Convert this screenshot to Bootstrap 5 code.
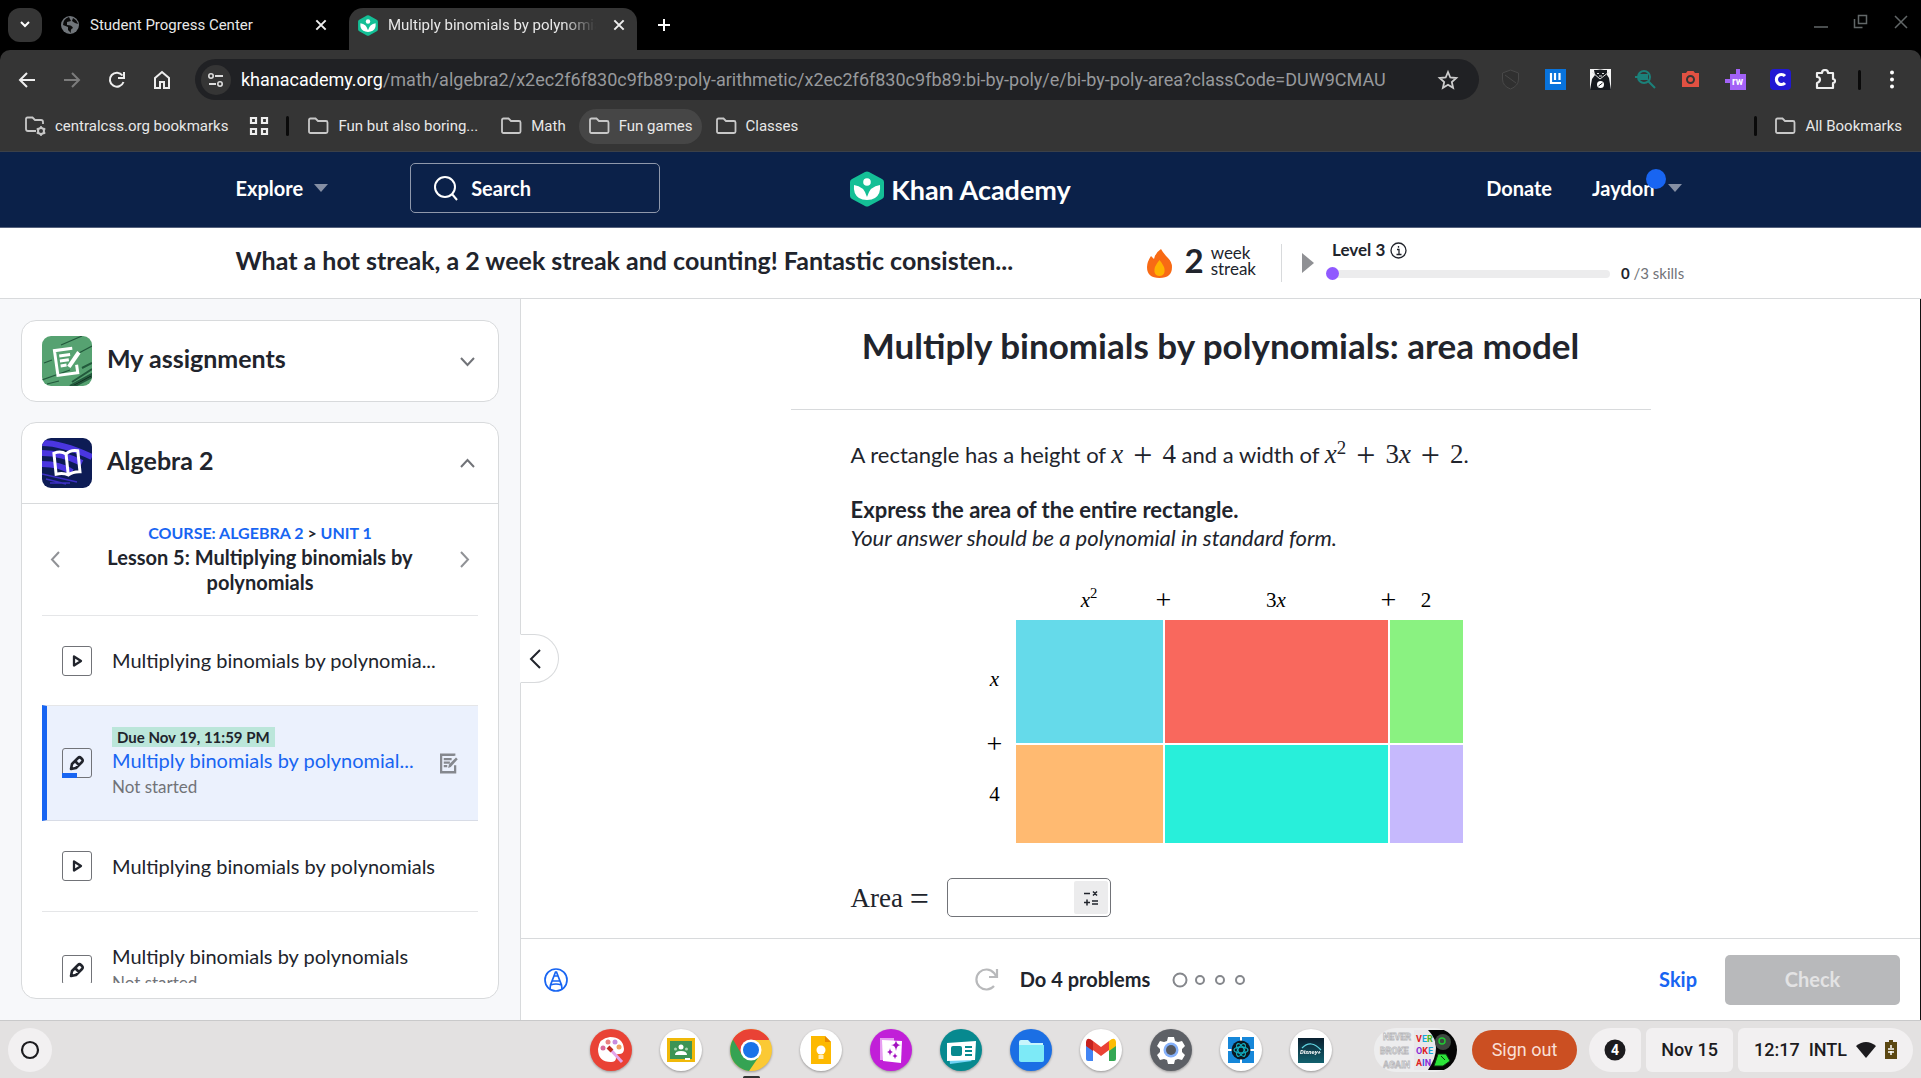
<!DOCTYPE html>
<html lang="en">
<head>
<meta charset="utf-8">
<meta name="viewport" content="width=device-width, initial-scale=1">
<title>Multiply binomials by polynomials: area model</title>
<link rel="stylesheet" href="https://cdn.jsdelivr.net/npm/bootstrap@5.3.0/dist/css/bootstrap.min.css">
<style>
body{font-family:Lato,"Noto Sans",sans-serif;font-size:20px;line-height:25px;color:#21242c;background:#000;height:100vh;overflow:hidden}
button{font:inherit;color:inherit;background:none;border:0;padding:0}
a{text-decoration:none;color:inherit}
svg{display:block;flex:none}
.chrome-ui{font-family:Roboto,sans-serif;color:#e8e8e8;font-size:15px;line-height:20px}
.tabstrip{height:50px;padding:8px 12px 0 8px;background:#000}
.tabsearch{width:34px;height:34px;border-radius:12px;background:#353535}
.tab-item{height:42px;padding:0 11px 8px 18px}
.tab-idle{width:301px;padding-right:15px}
.tab-live{width:288px;background:#353535;border-radius:14px 14px 0 0;margin-left:6px}
.tab-live .tab-label{-webkit-mask-image:linear-gradient(90deg,#000 84%,transparent);mask-image:linear-gradient(90deg,#000 84%,transparent)}
.tab-label{white-space:nowrap;overflow:hidden;flex:1}
.toolbar{height:59px;background:#353535;padding:0 15px;border-radius:10px 10px 0 0}
.omnibox{height:41px;border-radius:21px;background:#202124;flex:1;font-size:18px;padding:0 19px 0 6px;color:#97999c}
.omnibox b{font-weight:400;color:#fff}
.tune{width:30px;height:30px;border-radius:15px;background:#353535}
.vbar{width:3px;height:20px;background:#0a0a0a;border-radius:2px}
.bookbar{height:42px;background:#353535;padding:0 19px 8px 24px}
.bookbar a{height:35px;padding:0 9px;gap:9px;border-radius:18px}
.bookbar .lit{background:#464646}
.khan-nav{height:77px;background:#0b2149;color:#fff;font-weight:700;border-bottom:1px solid #56627d;border-top:1px solid #3c4048;padding-bottom:3px}
.wide-box{max-width:1450px;width:100%;margin:0 auto}
.search-box{width:250px;height:50px;border:1px solid #8f98ab;border-radius:5px;padding-left:22px;margin-left:82px}
.search-box input{background:none;border:0;outline:0;color:#fff;font-weight:700;width:170px;padding:0}
.search-box input::placeholder{color:#fff;opacity:1}
.brand{font-size:27px;padding-top:2px}
.user-dot{position:absolute;right:-11px;top:-7px;width:20px;height:20px;border-radius:50%;background:#1865f2}
.streak{height:71px;background:#fff;border-bottom:1px solid #d8dadc}
.streak-title{font-size:25px;font-weight:700;width:911px;line-height:32px;padding-bottom:6px}
.streak-num{font-size:33px;font-weight:700;line-height:36px;padding-bottom:6px}
.streak-word{font-size:17px;line-height:16px;padding-bottom:4px}
.level-name{font-size:17px;font-weight:700;line-height:20px;padding-bottom:1px}
.level-track{width:278px;height:8px;border-radius:4px;background:#ececed}
.level-dot{width:13px;height:13px;border-radius:50%;background:#9059ff;margin-left:-6px}
.skills{font-size:15px;color:#717378}
.skills b{color:#21242c}
.page-body{background:#fff;border-right:1px solid #111}
.side{width:521px;background:#f7f8fa;border-right:1px solid #d8dadc;padding:21px;gap:20px}
.panel{background:#fff;border:1px solid #d8dadc;border-radius:15px}
.panel-head{height:80px;padding:0 22px 0 20px;gap:15px;font-size:25px;font-weight:700;line-height:30px}
.panel-head span{padding-bottom:6px}
.tile-pic{width:50px;height:50px;border-radius:9px}
.lesson-nav{border-top:1px solid #d8dadc;margin:0 -1px;padding:16px 21px 0 21px;height:112px}
.crumb{font-size:16px;font-weight:700;color:#1865f2;line-height:25px}
.lesson-name{font-weight:700;line-height:25px}
.lesson-list{margin:0 20px 15px;overflow:hidden}
.lesson-row{border-top:1px solid #e5e6e8;height:90px;padding:0 19px 0 20px;gap:20px;flex:none}
.lesson-row.now{height:116px;background:#ebf1fd;border-left:5px solid #1865f2;border-bottom:1px solid #d8dce6;padding-left:15px}
.now .lesson-text{padding-bottom:4px}
.kind{width:30px;height:30px;border:1px solid #717378;border-radius:3px;position:relative}
.kind-bar{position:absolute;left:-1px;bottom:-1px;width:15px;height:5px;background:#1865f2}
.due{background:#bbe6da;font-size:15px;font-weight:700;line-height:20px;padding:0 5px;color:#21242c}
.sub{font-size:17px;color:#717378;line-height:25px;padding-top:1px}
.fold{position:absolute;left:-1px;top:335px;width:39px;height:49px;background:#fff;border:1px solid #d8dadc;border-left-color:#fff;border-radius:0 25px 25px 0;padding-left:6px}
.exercise{max-width:860px;width:100%;margin:0 auto;padding-top:26px}
.exercise h1{font-size:35px;font-weight:700;line-height:40px;margin:0}
.rule-line{border-top:1px solid #d8dadc;margin-top:44px;padding:30px 60px 0}
.prose{font-size:22px;line-height:28px}
.prose p{margin:0 0 27px}
.mathy{font-family:"Liberation Serif",serif;font-size:27px;line-height:28px;white-space:nowrap}
.mathy sup,.axis sup{font-size:70%;top:-9px;line-height:0}
.op{font-size:34px;line-height:0;margin:0 10px;vertical-align:-3px}
.axis{font-family:"Liberation Serif",serif;font-size:21px;line-height:28px;color:#000;text-align:center}
.plus{width:20px;margin:0 -9px;font-size:28px}
.axis-v .plus{width:auto;height:28px;margin:-13px 0}
.axis-v .h1x{padding-bottom:6px}
.w1{width:147px}.w2{width:223px}.w3{width:73px}
.h1x{height:123px}.h2x{height:98px}
.figure-box{margin-left:133px;gap:10px}
.answer{width:164px;height:39px;border:1px solid #717378;border-radius:5px;padding:2px}
.answer input{border:0;outline:0;width:124px;background:none}
.keypad{width:34px;background:#ececed;border-radius:2px}
.foot{height:82px;border-top:1px solid #d8dadc;padding:0 20px}
.foot .act{font-weight:700}
.check-btn{width:175px;height:50px;border-radius:5px;background:#b8b9bb;color:#e3e3e4;font-weight:700}
.shelf{height:58px;background:#e3e1e1;border-top:1px solid #c9c9ca;font-family:Roboto,sans-serif;font-size:18px;color:#1c1b1e;padding:0 8px}
.chip{height:44px;background:#f2f0f1;border-radius:6px}
.out{width:105px;height:40px;border-radius:20px;background:#cb4f22;color:#f9dfd6}
.apps{gap:28px}
.apps svg{filter:drop-shadow(0 1px 1px #0005)}
.apps .running{position:relative}
.apps .running:after{content:"";position:absolute;left:13px;bottom:-8px;width:17px;height:3px;background:#333;border-radius:2px}
</style>
<script src="https://cdn.jsdelivr.net/npm/bootstrap@5.3.0/dist/js/bootstrap.bundle.min.js"></script>
</head>
<body class="d-flex flex-column">
<svg width="0" height="0" class="position-absolute" aria-hidden="true"><defs>
<symbol id="folder" viewBox="0 0 22 18"><path d="M2 3q0-1.500 1.500-1.500h5l2.500 2.500h8q1.500 0 1.500 1.500v9q0 1.500-1.500 1.500h-15.500q-1.500 0-1.500-1.500z" fill="none" stroke="#c8c8c8" stroke-width="1.800"/></symbol>
<symbol id="leaf" viewBox="0 0 34 36"><path d="M15 1q2-1 4 0l13 7q2 1 2 3v14q0 2-2 3l-13 7q-2 1-4 0l-13-7q-2-1-2-3v-14q0-2 2-3z" fill="#14bf96"/><circle cx="17" cy="11" r="3.800" fill="#fff"/><path d="M4 14q10 1 13 12q3-11 13-12q1 9-5 13-3 2-8 2t-8-2q-6-4-5-13z" fill="#fff"/></symbol>
<symbol id="x" viewBox="0 0 12 12"><path d="M2 2l8 8M10 2l-8 8" stroke="#eee" stroke-width="1.700"/></symbol>
<symbol id="play" viewBox="0 0 14 16"><path d="M4 3.500l7 4.500-7 4.500z" fill="none" stroke="#21242c" stroke-width="2.300" stroke-linejoin="round"/></symbol>
<symbol id="pencil" viewBox="0 0 16 16"><path d="M2 14l1-5 6-6q1.500-1.500 3 0l1 1q1.500 1.500 0 3l-6 6zM6.500 6.500l3.500 3.500" fill="none" stroke="#21242c" stroke-width="2.600" stroke-linejoin="round"/></symbol>
<symbol id="doc" viewBox="0 0 22 24"><path d="M17 3V2H2v20h16v-8M5 7h9M5 11h7M5 15h4" fill="none" stroke="currentColor" stroke-width="2.600"/><path d="M10 17l1-4 8-8 2 2-8 9z" fill="currentColor"/></symbol>
</defs></svg>

<div class="chrome-ui flex-shrink-0">
 <div class="tabstrip d-flex">
  <button class="tabsearch d-flex align-items-center justify-content-center" aria-label="Search tabs"><svg width="12" height="10" viewBox="0 0 12 10"><path d="M2 2l4 4 4-4" fill="none" stroke="#fff" stroke-width="2"/></svg></button>
  <div class="tab-item tab-idle d-flex align-items-center gap-2">
   <svg width="20" height="20" viewBox="0 0 20 20" class="me-1"><circle cx="10" cy="10" r="9" fill="#70757a"/><path d="M9 2q-6 2-6 8l5 2v3l3 3q-1-4 2-5-1-3-6-3v-3l4-1zM13 3l-1 3 3 2 3 1q-1-4-5-6z" fill="#0a0a0a"/></svg>
   <span class="tab-label" style="margin-left:-2px">Student Progress Center</span>
   <button aria-label="Close tab"><svg width="14" height="14"><use href="#x"/></svg></button>
  </div>
  <div class="tab-item tab-live d-flex align-items-center gap-2" style="padding-left:9px">
   <svg width="20" height="21" style="margin-right:2px"><use href="#leaf"/></svg>
   <span class="tab-label">Multiply binomials by polynomials</span>
   <button aria-label="Close tab" class="ms-2"><svg width="14" height="14"><use href="#x"/></svg></button>
  </div>
  <button aria-label="New tab" class="ms-3 ps-1 pb-2"><svg width="14" height="14" viewBox="0 0 14 14"><path d="M7 1v12M1 7h12" stroke="#fff" stroke-width="2"/></svg></button>
  <div class="d-flex ms-auto gap-4 align-items-start pt-1">
   <button aria-label="Minimize"><svg width="16" height="18" viewBox="0 0 16 18"><path d="M1 15h14" stroke="#626768" stroke-width="1.500"/></svg></button>
   <button aria-label="Restore"><svg width="16" height="18" viewBox="0 0 16 18"><path d="M5.500 3.500h8v8h-8zM1.500 7v8.500h8" fill="none" stroke="#626768" stroke-width="1.500"/></svg></button>
   <button aria-label="Close"><svg width="16" height="18" viewBox="0 0 16 18"><path d="M2 4l12 12M14 4l-12 12" stroke="#626768" stroke-width="1.500"/></svg></button>
  </div>
 </div>
 <div class="toolbar d-flex align-items-center">
  <div class="d-flex align-items-center" style="width:180px;gap:21px">
   <button aria-label="Back"><svg width="24" height="24" viewBox="0 0 24 24"><path d="M20 12H5M12 5l-7 7 7 7" fill="none" stroke="#eee" stroke-width="2"/></svg></button>
   <button aria-label="Forward"><svg width="24" height="24" viewBox="0 0 24 24"><path d="M4 12h15M12 5l7 7-7 7" fill="none" stroke="#7c7c7c" stroke-width="2"/></svg></button>
   <button aria-label="Reload"><svg width="24" height="24" viewBox="0 0 24 24"><path d="M18.500 14a7 7 0 1 1-1-6.500M19 4v6h-6" fill="none" stroke="#eee" stroke-width="2"/></svg></button>
   <button aria-label="Home"><svg width="24" height="24" viewBox="0 0 24 24"><path d="M5 10l7-6 7 6v10h-5v-6h-4v6H5z" fill="none" stroke="#eee" stroke-width="2"/></svg></button>
  </div>
  <div class="omnibox d-flex align-items-center">
   <button class="tune d-flex align-items-center justify-content-center" aria-label="Site information"><svg width="18" height="18" viewBox="0 0 18 18"><path d="M8 5h8M2 13h7" stroke="#ddd" stroke-width="1.800"/><circle cx="4" cy="5" r="2.200" fill="none" stroke="#ddd" stroke-width="1.600"/><circle cx="13" cy="13" r="2.200" fill="none" stroke="#ddd" stroke-width="1.600"/></svg></button>
   <span class="flex-grow-1 text-nowrap" style="padding-left:10px"><b>khanacademy.org</b>/math/algebra2/x2ec2f6f830c9fb89:poly-arithmetic/x2ec2f6f830c9fb89:bi-by-poly/e/bi-by-poly-area?classCode=DUW9CMAU</span>
   <button aria-label="Bookmark"><svg width="24" height="24" viewBox="0 0 24 24"><path d="M12 4l2.300 5.500 6 .500-4.500 4 1.300 5.800L12 16.700l-5.100 3.100 1.300-5.800-4.500-4 6-.500z" fill="none" stroke="#ccc" stroke-width="1.800"/></svg></button>
  </div>
  <div class="d-flex align-items-center" style="gap:24px;padding-left:21px">
   <svg width="21" height="21" viewBox="0 0 21 21"><path d="M10.500 1l8 3v6q0 7-8 10-8-3-8-10V4zM5 6l11 8" fill="#303030" stroke="#484848"/></svg>
   <svg width="21" height="21" viewBox="0 0 21 21"><path d="M0 0h21v21H0z" fill="#0873dc"/><path d="M6 4v10h10M10 4v7M14.500 4v7" fill="none" stroke="#fff" stroke-width="2.200"/></svg>
   <svg width="21" height="21" viewBox="0 0 21 21"><path d="M0 0h21v21H0z" fill="#f4f4f4"/><path d="M4 1l3 0q3-1 7 0l3 0 0 5 2 3 2 12H0l2-11 3-4z" fill="#16191e"/><path d="M2 3l8 7 9-7M7 4.500h2M12 4.500h2M9 7h3" fill="none" stroke="#ddd"/><circle cx="10.500" cy="15.500" r="3.500" fill="#fff"/><path d="M8.500 17l4-3" stroke="#16191e"/></svg>
   <svg width="21" height="21" viewBox="0 0 21 21"><circle cx="9" cy="8" r="6" fill="none" stroke="#1b817a" stroke-width="2"/><path d="M0 8h12M5 6h7v4H5zM13 12l7 7" fill="none" stroke="#1b817a" stroke-width="2"/></svg>
   <svg width="21" height="21" viewBox="0 0 21 21"><path d="M2 4h4l1.500-2h6L15 4h4v14H2z" fill="#e15142"/><circle cx="10.500" cy="10.500" r="3.500" fill="none" stroke="#353535" stroke-width="2"/></svg>
   <svg width="21" height="21" viewBox="0 0 21 21"><path d="M5 5h6V0h4v5h6v16H5v-7H0v-4h5z" fill="#a362f7"/><text x="7" y="16" font-size="10" font-weight="700" fill="#fff">rw</text></svg>
   <svg width="21" height="21" viewBox="0 0 21 21"><rect width="21" height="21" rx="4" fill="#2118d3"/><path d="M15 7a5 5 0 1 0 0 7" fill="none" stroke="#fff" stroke-width="3.200"/></svg>
   <svg width="21" height="21" viewBox="0 0 21 21"><path d="M2 4h5q0-3 3-3t3 3h5v6q2 0 2 2t-2 2v5H2v-5q3-1 3-3.500T2 8z" fill="none" stroke="#eee" stroke-width="2.200" stroke-linejoin="round"/></svg>
   <div class="vbar" style="margin-left:-2px"></div>
   <svg width="21" height="21" viewBox="0 0 21 21"><g fill="#fff"><circle cx="7" cy="3.500" r="2"/><circle cx="7" cy="10.500" r="2"/><circle cx="7" cy="17.500" r="2"/></g></svg>
  </div>
 </div>
 <nav class="bookbar d-flex align-items-center" aria-label="Bookmarks">
  <a href="#" class="d-flex align-items-center ps-0"><svg width="22" height="22" viewBox="0 0 22 22"><path d="M12 16H4q-2 0-2-2V4q0-1.500 1.500-1.500h5L11 5h6q2 0 2 2v2" fill="none" stroke="#c8c8c8" stroke-width="1.800"/><circle cx="17" cy="16" r="3" fill="none" stroke="#c8c8c8" stroke-width="2"/><path d="M17 11v2M17 19v2M12.700 13.500l1.700 1M19.600 17.500l1.700 1M12.700 18.500l1.700-1M19.600 14.500l1.700-1" stroke="#c8c8c8" stroke-width="1.600"/></svg>centralcss.org bookmarks</a>
  <a href="#" aria-label="Apps" class="d-flex align-items-center ps-2 ms-1"><svg width="20" height="20" viewBox="0 0 20 20"><path d="M2 2h5v5H2zM13 2h5v5h-5zM2 13h5v5H2zM13 13h5v5h-5z" fill="none" stroke="#eee" stroke-width="2.200"/></svg></a>
  <div class="vbar ms-2"></div>
  <a href="#" class="d-flex align-items-center me-1" style="margin-left:9px"><svg width="22" height="18"><use href="#folder"/></svg>Fun but also boring...</a>
  <a href="#" class="d-flex align-items-center me-1"><svg width="22" height="18"><use href="#folder"/></svg>Math</a>
  <a href="#" class="lit d-flex align-items-center me-1"><svg width="22" height="18"><use href="#folder"/></svg>Fun games</a>
  <a href="#" class="d-flex align-items-center"><svg width="22" height="18"><use href="#folder"/></svg>Classes</a>
  <div class="vbar ms-auto me-2"></div>
  <a href="#" class="d-flex align-items-center pe-0"><svg width="22" height="18"><use href="#folder"/></svg>All Bookmarks</a>
 </nav>
</div>

<header class="khan-nav d-flex align-items-center flex-shrink-0">
 <div class="wide-box d-flex align-items-center">
  <div class="d-flex align-items-center" style="flex:1">
   <button class="d-flex align-items-center fw-bold" style="gap:11px">Explore<svg width="14" height="8"><path d="M0 0h14L7 8z" fill="#858fa4"/></svg></button>
   <label class="search-box d-flex align-items-center" style="gap:12px"><svg width="26" height="26" viewBox="0 0 26 26"><circle cx="12" cy="12" r="10" fill="none" stroke="#fff" stroke-width="2"/><path d="M19 19l5 6" stroke="#fff" stroke-width="2"/></svg><input type="text" placeholder="Search" aria-label="Search"></label>
  </div>
  <a href="#" class="brand d-flex align-items-center" style="gap:7px"><svg width="34" height="36"><use href="#leaf"/></svg>Khan Academy</a>
  <div class="d-flex align-items-center justify-content-end" style="flex:1;gap:40px">
   <a href="#">Donate</a>
   <button class="d-flex align-items-center fw-bold me-1" style="gap:13px"><span class="position-relative">Jaydon<i class="user-dot"></i></span><svg width="14" height="8"><path d="M0 0h14L7 8z" fill="#858fa4"/></svg></button>
  </div>
 </div>
</header>

<section class="streak d-flex align-items-center flex-shrink-0">
 <div class="wide-box d-flex align-items-center">
  <div class="streak-title">What a hot streak, a 2 week streak and counting! Fantastic consisten...</div>
  <svg width="25" height="29" viewBox="0 0 25 29"><path d="M14 0q2 4 7 9 4 4 4 9 0 11-12.500 11T0 18q0-5 4-11l3 3q1-6 7-10z" fill="#f86a14"/><path d="M12.500 11q6 7 5 12-1 4-5 4t-5-4q-1-5 5-12z" fill="#ffb100"/></svg>
  <span class="streak-num" style="margin-left:13px">2</span>
  <span class="streak-word" style="margin-left:7px">week<br>streak</span>
  <div style="width:1px;height:38px;background:#d8dadc;margin-left:25px"></div>
  <svg width="12" height="20" style="margin-left:20px"><path d="M0 0l12 10L0 20z" fill="#8f9094"/></svg>
  <div style="margin-left:18px">
   <div class="level-name d-flex align-items-center" style="gap:5px">Level 3 <svg width="17" height="17" viewBox="0 0 17 17"><circle cx="8.500" cy="8.500" r="7.500" fill="none" stroke="#21242c" stroke-width="1.300"/><path d="M7 7.500h2V12M6.500 12.500h5M8.500 4v1.800" fill="none" stroke="#21242c" stroke-width="1.300"/></svg></div>
   <div class="d-flex align-items-center" style="gap:11px"><div class="level-track d-flex align-items-center"><div class="level-dot"></div></div><span class="skills text-nowrap"><b>0</b> /3 skills</span></div>
  </div>
 </div>
</section>

<div class="page-body d-flex flex-grow-1" style="min-height:0">
 <aside class="side d-flex flex-column flex-shrink-0">
  <section class="panel flex-shrink-0">
   <button class="panel-head d-flex align-items-center w-100">
    <svg class="tile-pic" viewBox="0 0 50 50"><path d="M0 0h50v50H0z" fill="#56a271"/><path d="M19 9L40 0M0 44l28-10M35 18l15-8M2 27l8-3M5 48l12-3" stroke="#22593c" stroke-width="1.200"/><path d="M28 50l22-12v3L33 50zM40 32l10-5M30 46l20-13" stroke="#22593c" stroke-width="2"/><g transform="rotate(-8 25 25)" fill="none" stroke="#fff" stroke-width="3"><path d="M32 13H14v25h20V30M18 19h11M18 24h9M18 29h6"/><path d="M26 31l12-13" stroke-width="4"/></g></svg>
    <span>My assignments</span>
    <svg class="ms-auto" width="17" height="11" viewBox="0 0 17 11"><path d="M2 2l6.500 7L15 2" fill="none" stroke="#717378" stroke-width="2"/></svg>
   </button>
  </section>
  <section class="panel d-flex flex-column flex-grow-1" style="min-height:0">
   <button class="panel-head d-flex align-items-center w-100 flex-shrink-0">
    <svg class="tile-pic" viewBox="0 0 50 50"><path d="M0 0h50v50H0z" fill="#0d1c55"/><path d="M0 5q20 0 50 14M0 15q20 0 40 10M0 26q18 0 30 8" fill="none" stroke="#4a36e0" stroke-width="6"/><path d="M0 36l35 8M8 45h20M4 41l20 5" stroke="#3c2fc4" stroke-width="1.500"/><g transform="rotate(-6 25 25)" fill="none" stroke="#fff" stroke-width="3"><path d="M25 16q-5-4-12-2v21q7-1 12 2 5-3 12-2V14q-7-2-12 2zv21"/></g></svg>
    <span>Algebra 2</span>
    <svg class="ms-auto" width="17" height="11" viewBox="0 0 17 11"><path d="M2 9l6.500-7L15 9" fill="none" stroke="#717378" stroke-width="2"/></svg>
   </button>
   <div class="lesson-nav d-flex align-items-center flex-shrink-0">
    <button aria-label="Previous lesson" class="ms-2 pb-3"><svg width="10" height="17" viewBox="0 0 10 17"><path d="M9 1L2 8.500 9 16" fill="none" stroke="#909296" stroke-width="2"/></svg></button>
    <div class="flex-grow-1 text-center px-4 align-self-start"><div class="crumb"><a href="#">COURSE: ALGEBRA 2</a> <span class="text-dark">&gt;</span> <a href="#">UNIT 1</a></div><div class="lesson-name">Lesson 5: Multiplying binomials by polynomials</div></div>
    <button aria-label="Next lesson" class="me-2 pb-3"><svg width="10" height="17" viewBox="0 0 10 17"><path d="M1 1l7 7.500L1 16" fill="none" stroke="#909296" stroke-width="2"/></svg></button>
   </div>
   <div class="lesson-list d-flex flex-column flex-grow-1">
    <a href="#" class="lesson-row d-flex align-items-center"><span class="kind d-flex align-items-center justify-content-center"><svg width="14" height="16"><use href="#play"/></svg></span>Multiplying binomials by polynomia...</a>
    <a href="#" class="lesson-row now d-flex align-items-center"><span class="kind d-flex align-items-center justify-content-center"><svg width="16" height="16"><use href="#pencil"/></svg><i class="kind-bar"></i></span><span class="lesson-text flex-grow-1 text-nowrap"><span class="due d-inline-block">Due Nov 19, 11:59 PM</span><span class="d-block" style="color:#1865f2">Multiply binomials by polynomial...</span><span class="sub d-block">Not started</span></span><svg width="20" height="21" viewBox="0 0 22 24" color="#85888e"><use href="#doc"/></svg></a>
    <a href="#" class="lesson-row border-top-0 d-flex align-items-center"><span class="kind d-flex align-items-center justify-content-center"><svg width="14" height="16"><use href="#play"/></svg></span>Multiplying binomials by polynomials</a>
    <a href="#" class="lesson-row d-flex align-items-center" style="height:116px"><span class="kind d-flex align-items-center justify-content-center"><svg width="16" height="16"><use href="#pencil"/></svg></span><span>Multiply binomials by polynomials<span class="sub d-block">Not started</span></span></a>
   </div>
  </section>
 </aside>

 <main class="position-relative d-flex flex-column flex-grow-1">
  <button class="fold d-flex align-items-center" aria-label="Collapse sidebar"><svg width="16" height="22" viewBox="0 0 16 22"><path d="M13 2L4 11l9 9" fill="none" stroke="#21242c" stroke-width="2"/></svg></button>
  <div class="flex-grow-1" style="min-height:0">
   <div class="exercise">
    <h1 class="text-center">Multiply binomials by polynomials: area model</h1>
    <div class="rule-line">
     <div class="prose">
      <p>A rectangle has a height of <span class="mathy"><i>x</i><span class="op">+</span>4</span> and a width of <span class="mathy"><i>x</i><sup>2</sup><span class="op">+</span>3<i>x</i><span class="op">+</span>2</span>.</p>
      <p style="margin-bottom:34px"><b>Express the area of the entire rectangle.</b><br><i>Your answer should be a polynomial in standard form.</i></p>
     </div>
     <div class="figure-box d-flex align-items-end">
      <div class="axis axis-v d-flex flex-column" style="width:22px"><div class="h1x d-flex align-items-center justify-content-center"><i>x</i></div><div class="plus">+</div><div class="h2x d-flex align-items-center justify-content-center">4</div></div>
      <div>
       <div class="axis d-flex" style="margin-bottom:6px"><div class="w1"><i>x</i><sup>2</sup></div><div class="plus">+</div><div class="w2">3<i>x</i></div><div class="plus">+</div><div class="w3">2</div></div>
       <div class="d-flex" style="gap:2px;margin-bottom:2px"><div class="w1 h1x" style="background:#65daea"></div><div class="w2 h1x" style="background:#f9685d"></div><div class="w3 h1x" style="background:#8af281"></div></div>
       <div class="d-flex" style="gap:2px"><div class="w1 h2x" style="background:#ffba71"></div><div class="w2 h2x" style="background:#28efda"></div><div class="w3 h2x" style="background:#c6b9fd"></div></div>
      </div>
     </div>
     <div class="d-flex align-items-center" style="margin-top:35px;gap:12px">
      <label for="area" class="mathy" style="width:84px">Area <span class="op mx-0">=</span></label>
      <div class="answer d-flex"><input id="area" type="text"><button class="keypad d-flex align-items-center justify-content-center" aria-label="Open math keypad"><svg width="16" height="16" viewBox="0 0 16 16"><path d="M1 3.500h6M10 1.500l4 4M14 1.500l-4 4M1 12.500h6M4 9.500v6M9 11h6M9 14h6" stroke="#21242c" stroke-width="1.500"/></svg></button></div>
     </div>
    </div>
   </div>
  </div>
  <footer class="foot d-flex align-items-center flex-shrink-0">
   <div class="d-flex" style="flex:1"><button aria-label="Scratchpad" style="margin-left:3px"><svg width="24" height="24" viewBox="0 0 24 24" fill="none" stroke="#1865f2" stroke-width="1.700"><circle cx="12" cy="12" r="11"/><path d="M6 21l.500-4 5-13h1l5 13 .500 4M6.500 17q5.500-2 11 0M8.500 13h7M10.500 8h3"/></svg></button></div>
   <div class="d-flex align-items-center" style="margin-right:220px">
    <svg width="25" height="25" viewBox="0 0 25 25"><path d="M20 19a10 10 0 1 1 0-13l2 3M23 2v8h-8" fill="none" stroke="#b8b9bb" stroke-width="2.200"/></svg>
    <span class="act" style="margin:0 21px">Do 4 problems</span>
    <svg width="76" height="18" viewBox="0 0 76 18" fill="none" stroke="#85878c" stroke-width="2"><circle cx="9" cy="9" r="6.500"/><circle cx="29" cy="9" r="4"/><circle cx="49" cy="9" r="4"/><circle cx="69" cy="9" r="4"/></svg>
   </div>
   <div class="d-flex align-items-center justify-content-end" style="flex:1;gap:28px"><button class="act" style="color:#1865f2">Skip</button><button class="check-btn" disabled>Check</button></div>
  </footer>
 </main>
</div>

<div class="shelf d-flex align-items-center flex-shrink-0">
 <div class="d-flex" style="flex:1"><button aria-label="Launcher" class="chip rounded-circle d-flex align-items-center justify-content-center" style="width:44px"><svg width="20" height="20"><circle cx="10" cy="10" r="8" fill="none" stroke="#1c1b1e" stroke-width="2.200"/></svg></button></div>
 <div class="apps d-flex">
  <svg width="42" height="42" viewBox="0 0 42 42"><circle cx="21" cy="21" r="21" fill="#e94235"/><path d="M20 8q13 0 14 12 0 5-5 5-4 0-3 4 0 4-5 4Q8 33 8 20 9 9 20 8z" fill="#fff"/><circle cx="13" cy="19" r="2.500" fill="#d96b9b"/><circle cx="18" cy="13" r="2.500" fill="#e98080"/><circle cx="25" cy="13" r="2.500" fill="#c88de0"/><circle cx="29" cy="18" r="2.500" fill="#f0a060"/><path d="M20 20l12 13" stroke="#e5a4ea" stroke-width="3"/><path d="M18 18l4 4" stroke="#c02a20" stroke-width="4"/></svg>
  <svg width="42" height="42" viewBox="0 0 42 42"><circle cx="21" cy="21" r="21" fill="#fff"/><path d="M7 9h28v24H7z" fill="#f0b90a"/><path d="M10 12h22v18H10z" fill="#3d9455"/><circle cx="21" cy="18" r="2.500" fill="#fff"/><path d="M15 26q0-4 6-4t6 4z" fill="#fff"/><circle cx="15.500" cy="20" r="1.500" fill="#a8d5b0"/><circle cx="26.500" cy="20" r="1.500" fill="#a8d5b0"/><path d="M25 30h5" stroke="#fff" stroke-width="2"/></svg>
  <div class="running"><svg width="42" height="42" viewBox="0 0 42 42"><circle cx="21" cy="21" r="21" fill="#fbc934"/><path d="M21 21L3 10.500a21 21 0 0 0 16 31.400L30 26z" fill="#35a353"/><path d="M21 21L3 10.500a21 21 0 0 1 36.200 0H21z" fill="#e94235"/><path d="M3 10.500L12 26l9-15h18A21 21 0 0 0 3 10.500z" fill="#e94235"/><circle cx="21" cy="21" r="10.500" fill="#fff"/><circle cx="21" cy="21" r="8" fill="#1a73e8"/></svg></div>
  <svg width="42" height="42" viewBox="0 0 42 42"><circle cx="21" cy="21" r="21" fill="#fff"/><path d="M11 7h14l6 6v22H11z" fill="#fdb900"/><path d="M25 7l6 6h-6z" fill="#e88a00"/><circle cx="21" cy="21" r="4.500" fill="#fff"/><path d="M18.500 27h5M18.500 29h5" stroke="#fff" stroke-width="1.500"/></svg>
  <svg width="42" height="42" viewBox="0 0 42 42"><circle cx="21" cy="21" r="21" fill="#c11fd8"/><path d="M10 9h14v22H10z" fill="#e79cf1"/><path d="M12 11l20 1-1 22-18-2z" fill="#fff"/><path d="M26 11q.500 5 5 5-4.500 0-5 6-.500-6-5-6 4.500 0 5-5zM20 19q.300 3.500 3 4-2.700.500-3 4-.300-3.500-3-4 2.700-.500 3-4zM25 24q.300 2.500 2.500 3-2.200.500-2.500 3-.300-2.500-2.500-3 2.200-.500 2.500-3z" fill="#a312c0"/></svg>
  <svg width="42" height="42" viewBox="0 0 42 42"><circle cx="21" cy="21" r="21" fill="#07898f"/><path d="M8 14l24 18-22 3z" fill="#6fd3f5"/><path d="M7 14l29-2-1 19-28 1z" fill="#fff"/><rect x="11" y="17" width="11" height="10" rx="2" fill="#07898f"/><path d="M25 18h7M25 22h7M25 26h7" stroke="#07898f" stroke-width="2"/></svg>
  <svg width="42" height="42" viewBox="0 0 42 42"><circle cx="21" cy="21" r="21" fill="#1b6fe4"/><path d="M9 13q0-2 2-2h7l3 3h12v3H9z" fill="#c7f5fc"/><path d="M9 16h25v15q0 2-2 2H11q-2 0-2-2z" fill="#7deaf7"/></svg>
  <svg width="42" height="42" viewBox="0 0 42 42"><circle cx="21" cy="21" r="21" fill="#fff"/><path d="M6 13l7 5v14H8q-2 0-2-2z" fill="#4285f4"/><path d="M36 13l-7 5v14h5q2 0 2-2z" fill="#34a853"/><path d="M13 12l8 6 8-6v9l-8 6-8-6z" fill="#ea4335"/><path d="M29 12q6-5 7 1v4l-7 5z" fill="#fbbc04"/><path d="M13 12q-6-5-7 1v4l7 5z" fill="#c5221f"/></svg>
  <svg width="42" height="42" viewBox="0 0 42 42"><circle cx="21" cy="21" r="21" fill="#5d6066"/><path d="M18 8h6l1 4 3 1 4-1 3 5-3 3v3l3 3-3 5-4-1-3 1-1 4h-6l-1-4-3-1-4 1-3-5 3-3v-3l-3-3 3-5 4 1 3-1z" fill="#fff"/><circle cx="21" cy="21" r="7.500" fill="#85b0fa"/><circle cx="21" cy="21" r="5" fill="#55585e"/></svg>
  <svg width="42" height="42" viewBox="0 0 42 42"><circle cx="21" cy="21" r="21" fill="#fff"/><path d="M8 8h26v26H8z" fill="#1687d9"/><path d="M21 8v26M8 21h26" stroke="#fff" stroke-width="2"/><circle cx="21" cy="21" r="9.500" fill="#0b1720"/><g fill="none" stroke="#12adbf" stroke-width="1.300"><ellipse cx="21" cy="21" rx="7" ry="3"/><ellipse cx="21" cy="21" rx="7" ry="3" transform="rotate(60 21 21)"/><ellipse cx="21" cy="21" rx="7" ry="3" transform="rotate(120 21 21)"/></g></svg>
  <svg width="42" height="42" viewBox="0 0 42 42"><defs><linearGradient id="dz" x2="0" y2="1"><stop stop-color="#0a2030"/><stop offset="1" stop-color="#12616e"/></linearGradient></defs><circle cx="21" cy="21" r="21" fill="#fff"/><path d="M8 9h26v25H8z" fill="url(#dz)"/><path d="M12 19q9-9 19 2" fill="none" stroke="#62d5e2" stroke-width="1.200"/><text x="10" y="25" font-size="6" font-style="italic" font-weight="700" fill="#fff">Disney+</text></svg>
 </div>
 <div class="d-flex align-items-center justify-content-end" style="flex:1;gap:5px">
  <svg width="83" height="44" viewBox="0 0 83 44" style="margin-right:10px"><defs><clipPath id="pill"><rect width="83" height="44" rx="22"/></clipPath></defs><g clip-path="url(#pill)" font-weight="700"><path d="M0 0h83v44H0z" fill="#ededee"/><path d="M52 2h31v40H52z" fill="#050505"/><path d="M40 2h14q16 16 0 40H40z" fill="#e9e7ea"/><g font-size="9" fill="#fff" stroke="#b8b8bb" stroke-width=".8"><text x="9" y="12">NEVER</text><text x="6" y="26">BROKE</text><text x="9" y="40">AGAIN</text></g><g font-size="9"><text x="42" y="14"><tspan fill="#e02020">V</tspan><tspan fill="#19a7d8">E</tspan><tspan fill="#49b51e">R</tspan></text><text x="42" y="26"><tspan fill="#8a2bd6">O</tspan><tspan fill="#e02020">K</tspan><tspan fill="#19a7d8">E</tspan></text><text x="42" y="38"><tspan fill="#e02020">A</tspan><tspan fill="#2c5ce0">I</tspan><tspan fill="#8a2bd6">N</tspan></text></g><circle cx="69" cy="14" r="8" fill="#3e4740"/><circle cx="68" cy="13" r="3" fill="none" stroke="#20c832" stroke-width="1.500"/><path d="M60 38l4-12h8l4 7-7 5zM67 28l4 4" fill="#2be539" stroke="#0a390e"/></g></svg>
  <button class="out" style="margin-right:7px">Sign out</button>
  <button class="chip d-flex align-items-center justify-content-center" style="width:52px;border-radius:22px 6px 6px 22px"><svg width="22" height="22" viewBox="0 0 22 22"><circle cx="11" cy="11" r="10.500" fill="#1c1b1e"/><text x="11" y="16" font-size="14" font-weight="700" text-anchor="middle" fill="#fff">4</text></svg></button>
  <button class="chip fw-medium" style="width:87px">Nov 15</button>
  <button class="chip fw-medium d-flex align-items-center justify-content-center" style="width:175px;gap:9px;border-radius:6px 22px 22px 6px"><span>12:17</span><span>INTL</span><svg width="20" height="16"><path d="M0 4q10-8 20 0L10 16z" fill="#1c1b1e"/></svg><svg width="12" height="19" viewBox="0 0 12 19"><path d="M4 0h4v2h4v17H0V2h4z" fill="#5b4712"/><path d="M3 9h6M6 5v3M6 11v4M3 12h6" stroke="#fff" stroke-width="1.500"/></svg></button>
 </div>
</div>
</body>
</html>
